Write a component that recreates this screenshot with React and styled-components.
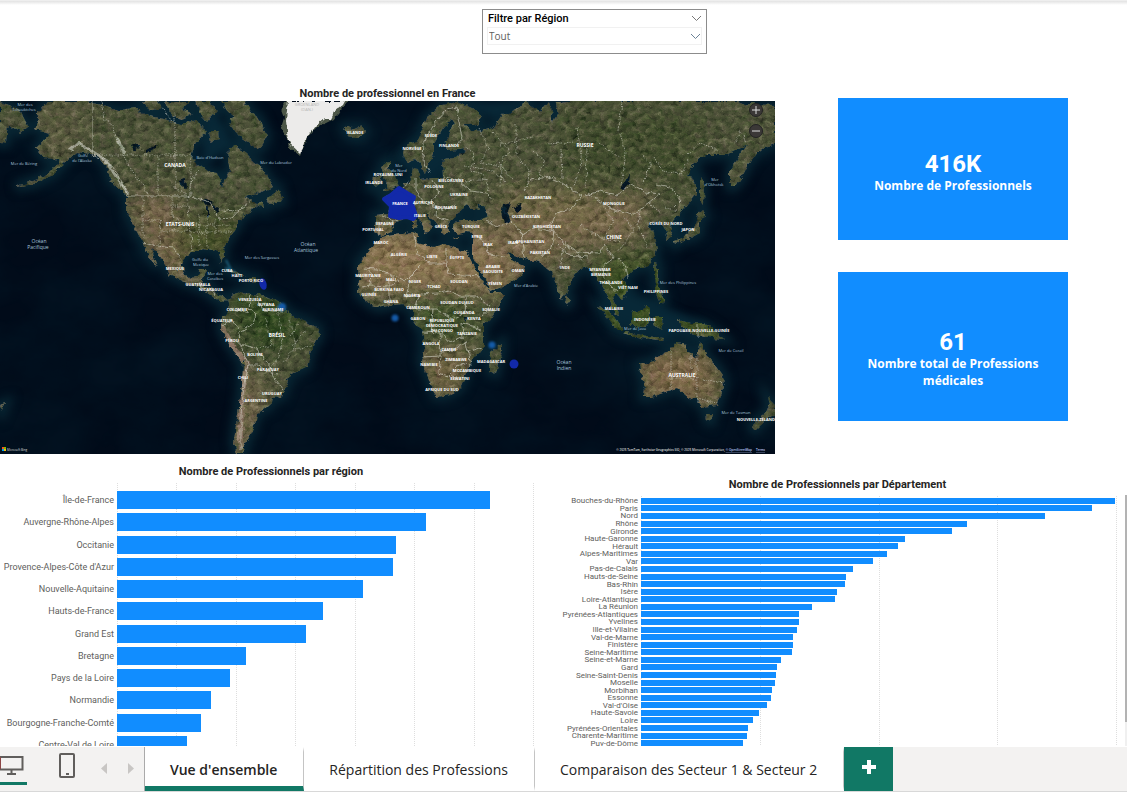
import React from "react";
import styled, { createGlobalStyle } from "styled-components";

const GlobalStyle = createGlobalStyle`
  *, *::before, *::after { box-sizing: border-box; }
  body { margin: 0; background: #fff; color: #252423; font-family: "Open Sans", "Noto Sans", sans-serif; }
  button, select { font: inherit; color: inherit; }
`;

const Page = styled.div`
  min-height: 100vh;
  display: flex;
  flex-direction: column;
  border-bottom: 1px solid #d8d8d8;
`;

const Report = styled.main`
  flex: 1;
  border-top: 1px solid #eee;
  background: linear-gradient(#e2e2e2, #fff 4px);
`;

const FilterBar = styled.div`
  display: flex;
  justify-content: center;
  padding: 8px 0 33px;
  margin-left: 62px;
`;

const Slicer = styled.section`
  width: 225px;
  height: 45px;
  background: #fff;
  border: 1px solid #8c8c8c;
  padding: 0 4px;
`;

const SlicerHeader = styled.div`
  display: flex;
  align-items: center;
  justify-content: space-between;
  height: 17px;
  padding-left: 1px;
`;

const SlicerLabel = styled.label`
  font: 500 11px/16px Roboto, sans-serif;
  color: #000;
`;

const IconButton = styled.button`
  display: flex;
  padding: 0;
  border: 0;
  background: none;
`;

const SelectWrap = styled.div`
  display: grid;
  align-items: center;
  border: 1px solid #f1f1f1;
  height: 18px;
  > * { grid-area: 1 / 1; }
  > svg { justify-self: end; pointer-events: none; }
`;

const Select = styled.select`
  appearance: none;
  width: 100%;
  height: 16px;
  padding: 0 1px;
  border: 0;
  background: none;
  color: #605e5c;
  font: 10px/16px "Open Sans", sans-serif;
`;

const TopRow = styled.div`
  display: grid;
  grid-template-columns: 775fr 352fr;
`;

const VisualTitle = styled.h2`
  margin: 0;
  padding-left: ${(p) => p.$indent || 0}px;
  font: 700 11px/14px Roboto, sans-serif;
  color: #252423;
  text-align: center;
`;

const MapPanel = styled.section`
  position: relative;
  > svg { display: block; width: 100%; height: auto; }
`;

const ZoomControls = styled.div`
  position: absolute;
  top: 16px;
  right: 12px;
  display: grid;
  gap: 7px;
`;

const ZoomButton = styled.button`
  width: 14px;
  height: 14px;
  display: grid;
  place-items: center;
  padding: 0;
  border: 1px solid #222;
  border-radius: 50%;
  background: #3b3837;
`;

const Cards = styled.div`
  display: grid;
  align-content: start;
  gap: 32px;
  padding: 11px 59px 0 63px;
`;

const Card = styled.section`
  min-height: ${(p) => p.$height}px;
  display: flex;
  flex-direction: column;
  align-items: center;
  justify-content: center;
  padding: ${(p) => p.$top}px 24px 0;
  background: #118dff;
  color: #fff;
  text-align: center;
`;

const CardValue = styled.strong`
  font: 700 24px/26px Roboto, sans-serif;
`;

const CardLabel = styled.span`
  font: 700 12px/17px "Open Sans", sans-serif;
`;

const Charts = styled.div`
  display: grid;
  grid-template-columns: 534fr 593fr;
  height: 292px;
  overflow: hidden;
`;

const Chart = styled.section`
  display: grid;
  align-content: start;
  grid-template-rows: 14px auto;
  row-gap: ${(p) => p.$gap}px;
  padding: ${(p) => p.$padding};
`;

const Plot = styled.div`
  position: relative;
  height: ${(p) => p.$height}px;
  padding-top: ${(p) => p.$top}px;
`;

const Gridlines = styled.div`
  position: absolute;
  inset: 0 0 0 ${(p) => p.$axis}px;
  display: flex;
  border-right: 1px dotted #dedede;
  > i { flex: 1; border-left: 1px dotted #dedede; }
`;

const Bars = styled.ul`
  position: relative;
  display: grid;
  grid-auto-rows: 1fr;
  height: 100%;
  margin: 0;
  padding: 0;
  list-style: none;
`;

const BarRow = styled.li`
  display: grid;
  grid-template-columns: ${(p) => p.$axis}px 1fr;
  align-items: center;
  min-height: 0;
  color: #605e5c;
  font-family: Roboto, sans-serif;
  font-size: ${(p) => p.$size}px;
  line-height: ${(p) => p.$line}px;
`;

const BarLabel = styled.span`
  padding-right: 3px;
  text-align: right;
  white-space: nowrap;
`;

const Bar = styled.div`
  height: ${(p) => p.$thickness}px;
  background: #118dff;
`;

const ChartWithScroll = styled.div`
  display: grid;
  grid-template-columns: 1fr 2px;
`;

const ScrollTrack = styled.div`
  margin-top: 41px;
  background: #f0f0f0;
  &::before { content: ""; display: block; height: 227px; background: #b3b3b3; }
`;

const Footer = styled.footer`
  display: flex;
  height: 44px;
  background: #f3f2f1;
`;

const ViewTools = styled.div`
  display: flex;
  align-items: stretch;
  width: 145px;
  border-right: 1px solid #aaa;
`;

const ViewButton = styled.button`
  display: flex;
  align-items: start;
  justify-content: ${(p) => (p.$active ? "start" : "center")};
  width: ${(p) => (p.$active ? 27 : 63)}px;
  height: 38px;
  padding: 6px 0 0 ${(p) => (p.$active ? 0 : 17)}px;
  border: 0;
  border-bottom: 3px solid ${(p) => (p.$active ? "#117865" : "transparent")};
  background: none;
`;

const ArrowButton = styled.button`
  display: grid;
  place-items: center;
  width: 27px;
  padding: 0 0 2px;
  border: 0;
  background: none;
`;

const Tabs = styled.nav`
  display: flex;
`;

const Tab = styled.button`
  padding: 2px 26px 0 25px;
  border: 0;
  border-right: 1px solid #c4c4c4;
  border-bottom: 5px solid ${(p) => (p.$active ? "#117865" : "#fff")};
  border-top: 5px solid #fff;
  background: #fff;
  color: #252423;
  font-size: 14px;
  line-height: 20px;
  font-weight: ${(p) => (p.$active ? 600 : 400)};
  white-space: nowrap;
`;

const AddButton = styled.button`
  display: grid;
  place-items: center;
  width: 49px;
  padding: 0 0 4px;
  border: 0;
  background: #117865;
`;

const regions = [
  ["Île-de-France", 373], ["Auvergne-Rhône-Alpes", 309], ["Occitanie", 279],
  ["Provence-Alpes-Côte d'Azur", 276], ["Nouvelle-Aquitaine", 246], ["Hauts-de-France", 206],
  ["Grand Est", 189], ["Bretagne", 129], ["Pays de la Loire", 113], ["Normandie", 94],
  ["Bourgogne-Franche-Comté", 84], ["Centre-Val de Loire", 70],
];

const departments = [
  ["Bouches-du-Rhône", 474], ["Paris", 451], ["Nord", 404], ["Rhône", 326], ["Gironde", 311],
  ["Haute-Garonne", 264], ["Hérault", 257], ["Alpes-Maritimes", 246], ["Var", 232],
  ["Pas-de-Calais", 212], ["Hauts-de-Seine", 205], ["Bas-Rhin", 204], ["Isère", 196],
  ["Loire-Atlantique", 194], ["La Réunion", 171], ["Pyrénées-Atlantiques", 158],
  ["Yvelines", 158], ["Ille-et-Vilaine", 156], ["Val-de-Marne", 152], ["Finistère", 152],
  ["Seine-Maritime", 151], ["Seine-et-Marne", 140], ["Gard", 136], ["Seine-Saint-Denis", 135],
  ["Moselle", 134], ["Morbihan", 131], ["Essonne", 130], ["Val-d'Oise", 126],
  ["Haute-Savoie", 118], ["Loire", 112], ["Pyrénées-Orientales", 107],
  ["Charente-Maritime", 106], ["Puy-de-Dôme", 102],
];

const land = [
  // North and Central America
  "M47 101L38 112L40 120L35 129L50 133L42 143L37 147L43 157L60 161L47 174L32 181L15 187L34 184L52 175L68 160L77 152L97 155L107 167L110 180L119 188L127 197L127 212L137 232L143 243L148 255L158 267L153 254L151 247L158 253L167 267L170 275L187 283L203 290L213 297L220 302L229 301L224 297L217 296L212 287L203 286L202 282L207 270L200 270L197 277L188 278L183 270L182 260L187 255L192 253L204 249L213 251L217 249L222 262L224 257L223 249L230 237L238 226L238 220L248 213L256 208L257 203L245 197L260 193L274 187L268 177L260 166L253 160L246 153L235 145L229 149L228 160L230 172L224 180L222 188L217 173L207 171L199 165L191 157L194 147L200 138L206 134L203 128L195 120L180 125L165 119L150 116L135 108L120 110L103 105L80 101Z",
  // Arctic islands and Newfoundland
  "M143 101L158 101L161 108L150 111Z M166 101L190 101L182 109L193 114L183 119L171 115Z M196 101L208 101L217 110L207 122L201 116Z M220 101L244 101L252 113L260 119L267 137L260 149L249 143L239 136L229 124L235 117L226 110Z M209 131L218 131L219 139L211 142Z M272 194L279 190L282 202L272 204L266 200Z M256 205L263 202L264 208Z",
  // South America
  "M233 295L240 291L251 294L262 295L280 303L290 315L305 321L318 328L319 337L311 350L307 367L290 375L282 397L272 398L270 407L257 413L256 421L252 432L246 443L243 454L237 454L234 443L235 432L237 418L240 405L242 385L243 362L231 348L221 330L222 320L230 308L228 300Z",
  // Africa
  "M382 237L396 235L413 232L418 235L417 243L433 247L444 244L460 250L467 253L474 266L481 279L491 293L505 293L500 305L492 317L483 325L483 350L473 357L467 372L460 388L450 395L437 397L433 391L430 382L422 362L425 345L422 332L413 320L413 309L402 304L393 305L378 308L370 304L358 294L359 280L358 265L366 254L375 243Z",
  // Eurasia
  "M403 152L405 147L417 140L427 117L442 105L456 101L474 109L482 117L479 125L465 123L470 130L483 131L494 127L501 116L521 107L525 101L540 112L549 101L553 123L558 115L556 103L568 101H738L745 104L775 105V143L763 149L753 157L747 167L742 177L735 187L730 187L730 170L737 160L747 145L727 155L705 155L700 158L690 168L687 177L693 178L697 188L697 193L683 210L672 223L671 230L673 235L668 239L663 225L658 221L648 227L653 232L657 250L648 265L633 270L628 275L622 278L628 288L627 294L622 300L616 293L612 297L616 307L620 315L615 313L610 300L603 287L600 282L595 275L587 267L580 269L573 277L567 292L562 300L558 292L552 272L547 268L540 262L525 259L514 255L507 252L511 261L525 265L523 273L513 281L491 292L486 280L481 272L473 257L473 247L474 233L467 232L458 234L452 228L453 223L461 220L480 220L489 217L485 208L477 203L480 210L472 209L468 205L463 209L457 213L453 218L448 223L450 232L443 234L436 222L429 217L424 213L429 221L434 226L431 228L425 235L424 226L418 217L410 218L402 220L395 222L390 233L382 236L375 232V215L388 214L390 207L383 197L396 193L399 188L409 182L413 168L418 169L420 179L433 178L443 178L442 161L457 157L467 149L449 151L444 142L451 131L455 124L452 119L443 128L434 144L434 154L428 165L425 174L421 164L416 159L409 163L404 159Z",
  // British Isles, Iceland, Mediterranean islands
  "M383 164L390 161L390 168L395 179L399 186L384 192L388 183L382 176Z M374 177L381 175L380 186L372 187Z M344 127L349 126L352 130L361 126L366 132L359 138L348 136Z M413 220L416 219L417 228L413 229Z M453 237L459 237L457 239Z",
  // Asia's islands
  "M700 178L704 185L703 204L700 200Z M697 214L702 210L706 216L700 219L700 233L690 239L683 239L676 245L675 241L686 235L694 229Z M631 313L642 310L646 305L651 311L648 325L637 328L631 322Z M599 306L608 310L617 321L623 330L616 330L608 319Z M624 332L646 336L664 338L663 340L641 338L624 334Z M654 268L659 269L658 286L665 300L660 304L655 289Z M654 316L663 318L660 330L656 326Z M678 320L690 323L703 324L714 330L724 339L714 338L703 336L691 334L683 326Z M567 295L571 301L568 305L565 302Z M654 262L657 263L655 270Z",
  // Oceania and Madagascar
  "M639 365L653 361L660 355L670 350L675 343L687 345L687 353L697 357L700 341L706 355L715 364L723 375L724 388L717 405L702 407L697 399L689 398L677 388L663 393L651 397L643 397L644 385Z M706 414L713 414L711 422L707 420Z M767 397L775 405V414L764 421L755 430L752 426L762 416L770 410Z M490 353L502 343L502 350L496 374L489 371Z M240 293L246 293L244 297Z M226 270L238 272L246 275L237 275Z M249 278L258 278L258 282L249 281Z",
  "M0 102L18 108L28 127L20 133L8 124L6 143L0 142Z M0 406L5 404L2 411Z",
].join(" ");

const borders = [
  "M92 101V155L104 159L113 167L121 181L128 196H190L210 202L219 219L232 218L241 208L251 201",
  "M143 243L157 246L173 248L182 260M200 282L201 288M211 288L214 295",
  "M429 173L423 160L424 142L436 121L447 109L456 107L462 138L456 147M400 190L410 182M416 178L416 191L423 201L411 206L412 216M433 179L439 193L430 201L443 210L456 205M444 177L459 180L471 191L486 193L493 198M426 203L437 207L436 217L449 220M382 216L397 222M379 222L379 234",
  "M414 234L418 255L430 263L446 263V248M363 268L377 269L405 281L420 266M446 263L448 274L480 276M370 270L371 285L363 287M389 278V305M371 286L389 287L398 281M410 278L406 297L420 294L438 293L447 290L461 296L477 296L490 306L482 316M420 294L415 309L437 309L452 319L465 313L466 297M433 309L431 330L441 332L450 343L463 337L462 323L481 329M422 332L441 333L440 356L422 357M440 351L454 350L465 342L467 352L482 347M441 357L439 373L448 376L457 367L466 363M468 349L471 366M447 375L456 377",
  "M474 235L485 242L489 255L505 257M486 220L498 226L507 224M511 221L521 232L524 258M521 234L536 228L554 232L551 247L541 258M523 190L531 180L548 177L563 183L581 195L573 208L557 213L548 227L557 233L563 243L577 252L599 253L604 244L614 258L603 266L604 279M588 193L600 201L614 210L632 215L648 204L660 194L645 192L632 184L617 195L600 191L585 196M656 184L670 187L681 201L674 208M558 244L568 255L588 257M618 257L626 267L628 278M604 281L617 291",
  "M251 294L249 308L256 314L253 324L239 332L240 344L256 348L264 360L272 369L275 380L283 390M232 309L249 313M221 326L232 319L239 329M256 295L263 310L282 312M241 346L248 364L244 384L241 414L241 450M248 365L259 365L267 372L278 374",
  "M698 323V338",
].join(" ");

const states = [
  "M101 101L104 119L112 125L121 151L131 169L143 185L149 196M99 155H191M158 156V196M175 156V113M175 156V188L190 196M161 106L176 125M191 156V196M198 170L190 184V196",
  "M143 197V238M160 220V245M172 197V216M172 206H187M172 216L185 224H197L205 235M187 198L190 225L193 252M187 225H230M193 232H232M199 214L199 245M207 215V248M215 220L215 235M220 210L239 211M145 220H160V231H192",
  "M266 319L272 345L259 349M278 313L282 338L279 357L266 373M289 319L296 345L283 362M300 323L290 336M307 329L292 347M312 345L292 350",
  "M464 145L475 154L470 171L484 174L489 191M479 129L489 148L481 162L501 167L500 188M493 132L509 151L499 164L512 179M516 123L516 155L529 170L528 182M533 151L545 161L538 175L556 178M561 149L562 178M577 128L582 162L574 186M587 147L586 188M622 101L619 130L626 153L621 186M641 153L651 164L642 184M654 157L662 171L681 174L688 160M688 154L700 143L718 150M734 144L741 131L746 143M500 145L532 137M548 144L575 142M599 143L620 158M464 166L492 170L506 181M466 182L487 179",
  "M604 207L613 221L603 240M624 216L634 230L618 252M640 211L638 226L648 247M650 204L661 213M580 225L603 239L623 242M577 252L583 262M566 242L559 268M665 207L676 211",
  "M671 351V390M691 354V370M697 357V403M671 378H697L712 381L724 383M697 398L717 403",
].join(" ");

const labels = [
  [175, 167, "CANADA", 5], [180, 226, "ETATS-UNIS", 5], [355, 134, "ISLANDE"], [431, 137, "SUÈDE"],
  [412, 150, "NORVÈGE"], [449, 147, "FINLANDE"], [388, 176, "ROYAUME-UNI"], [374, 184, "IRLANDE"],
  [451, 182, "BIÉLORUSSIE"], [434, 188, "POLOGNE"], [459, 196, "UKRAINE"], [423, 204, "AUTRICHE"],
  [446, 209, "ROUMANIE"], [400, 205, "FRANCE"], [420, 217, "ITALIE"], [385, 225, "ESPAGNE"],
  [373, 231, "PORTUGAL"], [441, 228, "GRÈCE"], [471, 228, "TURQUIE"], [477, 238, "SYRIE"],
  [488, 246, "IRAK"], [513, 244, "IRAN"], [381, 244, "MAROC"], [399, 256, "ALGÉRIE"], [432, 258, "LIBYE"],
  [457, 259, "ÉGYPTE"], [493, 268, "ARABIE"], [493, 273, "SAOUDITE"], [518, 272, "OMAN"],
  [495, 285, "YÉMEN"], [368, 277, "MAURITANIE"], [391, 281, "MALI"], [415, 283, "NIGER"],
  [434, 288, "TCHAD"], [459, 283, "SOUDAN"], [389, 291, "BURKINA FASO"], [369, 296, "GUINÉE"],
  [412, 297, "NIGÉRIA"], [391, 303, "GHANA"], [418, 309, "CAMEROUN"], [457, 304, "SOUDAN DU SUD"],
  [491, 311, "SOMALIE"], [464, 314, "OUGANDA"], [474, 320, "KENYA"], [418, 320, "GABON"],
  [442, 322, "RÉPUBLIQUE"], [442, 327, "DÉMOCRATIQUE"], [442, 332, "DU CONGO"], [467, 335, "TANZANIE"],
  [431, 345, "ANGOLA"], [449, 351, "ZAMBIE"], [456, 361, "ZIMBABWE"], [429, 366, "NAMIBIE"],
  [467, 372, "MOZAMBIQUE"], [460, 380, "ESWATINI"], [442, 391, "AFRIQUE DU SUD"], [491, 363, "MADAGASCAR"],
  [585, 147, "RUSSIE", 5], [538, 199, "KAZAKHSTAN"], [614, 205, "MONGOLIE"], [547, 228, "KIRGHIZISTAN"],
  [614, 239, "CHINE", 5], [666, 225, "CORÉE DU NORD"], [688, 231, "JAPON"], [526, 218, "OUZBÉKISTAN"],
  [530, 243, "AFGHANISTAN"], [540, 254, "PAKISTAN"], [565, 269, "INDE"], [600, 271, "MYANMAR"],
  [601, 276, "BIRMANIE"], [611, 284, "THAÏLANDE"], [628, 289, "VIÊT NAM"], [656, 293, "PHILIPPINES"],
  [614, 310, "MALAISIE"], [645, 321, "INDONÉSIE"], [699, 332, "PAPOUASIE-NOUVELLE-GUINÉE"],
  [682, 377, "AUSTRALIE", 5], [757, 421, "NOUVELLE-ZÉLANDE"], [175, 270, "MEXIQUE"],
  [198, 286, "GUATEMALA"], [211, 291, "NICARAGUA"], [227, 272, "CUBA"], [237, 277, "HAÏTI"],
  [251, 282, "PORTO RICO"], [250, 301, "VENEZUELA"], [237, 311, "COLOMBIE"], [266, 306, "GUYANA"],
  [273, 311, "SURINAME"], [222, 322, "ÉQUATEUR"], [277, 337, "BRÉSIL", 5], [232, 342, "PÉROU"],
  [255, 356, "BOLIVIE"], [268, 371, "PARAGUAY"], [243, 379, "CHILI"], [272, 395, "URUGUAY"],
  [256, 402, "ARGENTINE"],
];

const seas = [
  [25, 106, "Mer des"], [24, 111, "Tchouktches"], [24, 165, "Mer de Béring"], [83, 157, "Golfe"],
  [82, 162, "de l'Alaska"], [210, 159, "Baie d'Hudson"], [276, 164, "Mer du Labrador"],
  [39, 243, "Océan", 5], [38, 249, "Pacifique", 5], [308, 246, "Océan", 5], [306, 252, "Atlantique", 5],
  [200, 261, "Golfe du"], [201, 266, "Mexique"], [262, 259, "Mer des Sargasses"], [215, 275, "Mer des"],
  [215, 280, "Caraïbes"], [399, 167, "Mer"], [399, 172, "du Nord"], [715, 181, "Mer"],
  [714, 186, "d'Okhotsk"], [526, 287, "Mer d'Arabie"], [564, 364, "Océan", 5], [564, 370, "Indien", 5],
  [678, 284, "Mer des Philippines"], [635, 330, "Mer de Java"], [731, 352, "Mer de Corail"],
  [736, 414, "Mer de Tasman"],
];

function WorldMap() {
  return (
    <svg viewBox="0 101 775 353" role="img" aria-label="Carte du monde" fontFamily="Open Sans, sans-serif">
      <defs>
        <clipPath id="frame"><rect y="101" width="775" height="353" /></clipPath>
        <filter id="soft" colorInterpolationFilters="sRGB"><feGaussianBlur stdDeviation="5" /></filter>
        <filter id="softLand" x="-30%" y="-30%" width="160%" height="160%" colorInterpolationFilters="sRGB"><feGaussianBlur stdDeviation="12" /></filter>
        <filter id="spot" colorInterpolationFilters="sRGB"><feGaussianBlur stdDeviation="1" /></filter>
        <filter id="coast" x="0" y="0" width="100%" height="100%" colorInterpolationFilters="sRGB">
          <feTurbulence type="fractalNoise" baseFrequency=".18" numOctaves="3" seed="4" />
          <feDisplacementMap in="SourceGraphic" scale="5" xChannelSelector="R" yChannelSelector="G" />
        </filter>
        <filter id="terrain" x="0" y="0" width="100%" height="100%" colorInterpolationFilters="sRGB">
          <feTurbulence type="fractalNoise" baseFrequency=".14 .18" numOctaves="5" seed="8" result="noise" />
          <feColorMatrix in="noise" type="matrix" values=".8 .4 0 0 -.13  .6 .5 0 0 -.09  .7 .3 0 0 -.06  0 0 0 0 1" result="relief" />
          <feBlend in="relief" in2="SourceGraphic" mode="soft-light" result="lit" />
          <feComposite in="lit" in2="SourceGraphic" operator="in" result="ground" />
          <feDisplacementMap in="ground" in2="noise" scale="6" xChannelSelector="R" yChannelSelector="G" />
        </filter>
        <filter id="seafloor" x="0" y="0" width="100%" height="100%" colorInterpolationFilters="sRGB">
          <feTurbulence type="fractalNoise" baseFrequency=".012 .018" numOctaves="5" seed="12" />
          <feColorMatrix type="matrix" values="0 0 0 0 .02  0 0 0 0 .13  0 0 0 0 .19  1.4 0 0 0 -.4" />
        </filter>
        <clipPath id="landClip"><path d={land} /></clipPath>
      </defs>
      <g clipPath="url(#frame)">
        <rect y="101" width="775" height="353" fill="#010b19" />
        <rect y="101" width="775" height="353" filter="url(#seafloor)" opacity=".5" />
        <path d={land} fill="#082431" stroke="#082633" strokeWidth="10" filter="url(#soft)" />
        <path d="M395 160L430 180L465 155L442 125M450 101L495 120L540 101M207 101L235 145L200 170M599 275L710 330L665 340L610 320M645 225L675 240L690 215" fill="#082837" filter="url(#soft)" />
        <g filter="url(#terrain)">
          <g clipPath="url(#landClip)">
            <rect y="101" width="775" height="353" fill="#4f563d" />
            <g filter="url(#softLand)">
              <path d="M35 101H90L75 160L35 160Z" fill="#5c5d44" />
              <path d="M125 195H175L195 290L158 270Z" fill="#78684f" />
              <path d="M175 220H240V260H180Z" fill="#4c552f" />
              <path d="M350 228H480L525 292H355Z" fill="#8b7757" />
              <path d="M475 225L560 210L650 190L640 240L570 250L510 290Z" fill="#796b50" />
              <path d="M500 190L600 190L590 215L500 215Z" fill="#746c4b" />
              <path d="M225 295H290L305 340L255 350Z" fill="#314a23" />
              <path d="M410 305H475V335H420Z" fill="#3e522b" />
              <path d="M420 350L475 350L455 398L425 390Z" fill="#756749" />
              <path d="M640 350L710 350L720 405L640 400Z" fill="#806c4f" />
              <path d="M232 360L268 390L250 454L230 454Z" fill="#756a50" />
              <path d="M560 115H700V185H570Z" fill="#455033" />
              <path d="M595 260H730V340H600Z" fill="#3e5226" />
            </g>
            <path d="M221 326L235 349L247 363L242 395L240 448" fill="none" stroke="#8b7968" strokeWidth="5" />
            <path d="M70 150L78 143L90 150L106 160L117 178L128 194M117 139L125 154M248 104L259 111" fill="none" stroke="#c7cbc2" strokeWidth="3" opacity=".65" />
            <path d="M130 146L137 143L142 147L133 151ZM146 149L156 144L154 149L146 153ZM179 180L185 178L186 189L181 186ZM201 201L207 198L213 203L205 205ZM207 207L209 206V219L207 218ZM213 205L219 208L217 214ZM620 188L626 181L630 174L629 183L623 190ZM503 205L511 203L508 211L512 222L504 224L501 213ZM460 155L463 148L464 153ZM463 317L468 317L467 322ZM513 207L520 204L523 208L517 212Z" fill="#051827" />
          </g>
        </g>
        <path d="M285 101L281 110L284 118L281 128L286 135L289 147L300 156L305 143L311 133L317 127L326 123L334 119L342 109L349 101Z" fill="#4c5647" filter="url(#coast)" />
        <path d="M288 101L286 120L288 142L301 154L304 143L310 133L317 125L324 119L331 119L335 111L343 105L345 101Z" fill="#ecebea" filter="url(#coast)" />
        <g fill="none" stroke="#d9dace" filter="url(#coast)">
          <path d={borders} strokeWidth=".9" opacity=".65" />
          <path d={states} strokeWidth=".8" strokeDasharray="1.5 1" opacity=".7" />
        </g>
        <path d="M226 260L231 270M225 268L235 272" stroke="#237496" strokeWidth="2" opacity=".7" filter="url(#spot)" />
        <g fill="#1229a9">
          <path d="M399 188L407 193L414 197L412 204L416 216L413 219L407 217L399 218L390 216L391 206L384 199L391 195Z" stroke="#1229a9" strokeWidth="4" strokeLinejoin="round" />
          <ellipse cx="263" cy="284" rx="3.5" ry="6" transform="rotate(-15 263 284)" />
          <circle cx="514" cy="364" r="4.5" />
        </g>
        <g fill="#145aa7" filter="url(#spot)">
          <circle cx="282" cy="307" r="4" /><circle cx="395" cy="318" r="3.5" /><circle cx="492" cy="345" r="3.5" />
        </g>
        <g fill="#fff" textAnchor="middle" fontWeight="700">
          {labels.map(([x, y, text, size = 4]) => <text key={text} x={x} y={y} fontSize={size}>{text}</text>)}
        </g>
        <g fill="#a8c4dc" textAnchor="middle">
          {seas.map(([x, y, text, size = 4], i) => <text key={i} x={x} y={y} fontSize={size}>{text}</text>)}
        </g>
        <g fill="#b4b4b4" textAnchor="middle" fontSize="4">
          <text x="307" y="106">GROENLAND</text><text x="307" y="111">(DAN.)</text>
        </g>
        <path d="M2 447h2v2h-2z" fill="#f25022" /><path d="M4 447h2v2h-2z" fill="#7fba00" />
        <path d="M2 449h2v2h-2z" fill="#00a4ef" /><path d="M4 449h2v2h-2z" fill="#ffb900" />
        <text x="7" y="451" fontSize="3" fill="#ddd">Microsoft Bing</text>
        <text x="765" y="451" fontSize="3" fontWeight="600" fill="#ddd" textAnchor="end">© 2025 TomTom, Earthstar Geographics SIO, © 2025 Microsoft Corporation, <tspan textDecoration="underline" fill="#b8c6f4">© OpenStreetMap</tspan><tspan dx="4" textDecoration="underline" fill="#b8c6f4">Terms</tspan></text>
      </g>
    </svg>
  );
}

function Chevron({ color = "#777" }) {
  return <svg width="11" height="7" fill="none" stroke={color} aria-hidden="true"><path d="M1 1l4.500 4.500L10 1" /></svg>;
}

function BarChart({ title, indent, data, max, axis, ticks, height, top, thickness, size, line, gap, padding }) {
  return (
    <Chart $gap={gap} $padding={padding}>
      <VisualTitle $indent={indent}>{title}</VisualTitle>
      <Plot $height={height} $top={top}>
        <Gridlines $axis={axis} aria-hidden="true">
          {Array.from({ length: ticks }, (_, i) => <i key={i} />)}
        </Gridlines>
        <Bars>
          {data.map(([name, value]) => (
            <BarRow key={name} $axis={axis} $size={size} $line={line}>
              <BarLabel>{name}</BarLabel>
              <Bar $thickness={thickness} style={{ width: `${(value / max) * 100}%` }} />
            </BarRow>
          ))}
        </Bars>
      </Plot>
    </Chart>
  );
}

export default function App() {
  return (
    <Page>
      <GlobalStyle />
      <Report>
        <FilterBar>
          <Slicer>
            <SlicerHeader>
              <SlicerLabel htmlFor="region">Filtre par Région</SlicerLabel>
              <IconButton aria-label="Options du filtre"><Chevron /></IconButton>
            </SlicerHeader>
            <SelectWrap>
              <Select id="region" defaultValue="Tout"><option>Tout</option></Select>
              <Chevron color="#6b8297" />
            </SelectWrap>
          </Slicer>
        </FilterBar>
        <TopRow>
          <MapPanel>
            <VisualTitle>Nombre de professionnel en France</VisualTitle>
            <WorldMap />
            <ZoomControls>
              <ZoomButton aria-label="Zoom avant"><svg width="8" height="8" stroke="#ddd"><path d="M4 0v8M0 4h8" /></svg></ZoomButton>
              <ZoomButton aria-label="Zoom arrière"><svg width="8" height="8" stroke="#ddd"><path d="M0 4h8" /></svg></ZoomButton>
            </ZoomControls>
          </MapPanel>
          <Cards>
            <Card $height={142} $top={7}><CardValue>416K</CardValue><CardLabel>Nombre de Professionnels</CardLabel></Card>
            <Card $height={149} $top={24}><CardValue>61</CardValue><CardLabel>Nombre total de Professions médicales</CardLabel></Card>
          </Cards>
        </TopRow>
        <Charts>
          <BarChart title="Nombre de Professionnels par région" indent={8} data={regions} max={417} axis={117} ticks={7}
            height={273} top={6} thickness={18} size={9} line={12} gap={4} padding="11px 0 0" />
          <ChartWithScroll>
            <BarChart title="Nombre de Professionnels par Département" indent={24} data={departments} max={476} axis={107} ticks={4}
              height={251} top={1} thickness={6} size={8} line={7} gap={4} padding="24px 8px 0 0" />
            <ScrollTrack />
          </ChartWithScroll>
        </Charts>
      </Report>
      <Footer>
        <ViewTools>
          <ViewButton $active aria-label="Affichage bureau">
            <svg width="26" height="26" fill="none" stroke="#605e5c" strokeWidth="2"><path d="M0 4H22.500V16.500H0M11.500 17V21M7 21H16" /><path d="M0 4V16" stroke="#8b4545" /></svg>
          </ViewButton>
          <ViewButton aria-label="Affichage mobile">
            <svg width="18" height="26" fill="none" stroke="#605e5c" strokeWidth="2"><rect x="2" y="1" width="14" height="23" rx="1" /><path d="M8 21h3" /></svg>
          </ViewButton>
          <ArrowButton aria-label="Page précédente"><svg width="6" height="11" fill="#c8c6c4"><path d="M6 0v11L0 5.500z" /></svg></ArrowButton>
          <ArrowButton aria-label="Page suivante"><svg width="6" height="11" fill="#c8c6c4"><path d="M0 0v11l6-5.500z" /></svg></ArrowButton>
        </ViewTools>
        <Tabs aria-label="Pages du rapport">
          <Tab $active>Vue d'ensemble</Tab>
          <Tab>Répartition des Professions</Tab>
          <Tab>Comparaison des Secteur 1 &amp; Secteur 2</Tab>
        </Tabs>
        <AddButton aria-label="Ajouter une page">
          <svg width="16" height="16" stroke="#fff" strokeWidth="4"><path d="M8 1v14M1 8h14" /></svg>
        </AddButton>
      </Footer>
    </Page>
  );
}
